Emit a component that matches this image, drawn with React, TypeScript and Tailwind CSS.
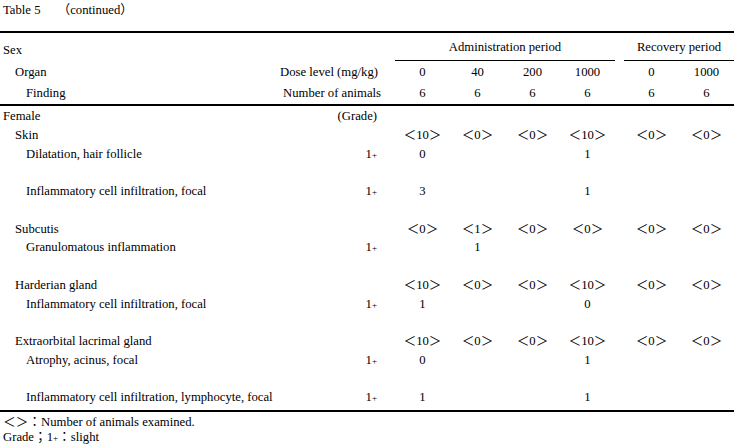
import React from 'react'

type Row = {
  label: string
  level: number
  grade?: string
  admin?: string[]
  recovery?: string[]
}

const rows: Row[] = [
  { label: 'Female', level: 0, grade: '(Grade)' },
  { label: 'Skin', level: 1, admin: ['＜10＞', '＜0＞', '＜0＞', '＜10＞'], recovery: ['＜0＞', '＜0＞'] },
  { label: 'Dilatation, hair follicle', level: 2, grade: '1+', admin: ['0', '', '', '1'] },
  { label: '', level: 0 },
  { label: 'Inflammatory cell infiltration, focal', level: 2, grade: '1+', admin: ['3', '', '', '1'] },
  { label: '', level: 0 },
  { label: 'Subcutis', level: 1, admin: ['＜0＞', '＜1＞', '＜0＞', '＜0＞'], recovery: ['＜0＞', '＜0＞'] },
  { label: 'Granulomatous inflammation', level: 2, grade: '1+', admin: ['', '1', '', ''] },
  { label: '', level: 0 },
  { label: 'Harderian gland', level: 1, admin: ['＜10＞', '＜0＞', '＜0＞', '＜10＞'], recovery: ['＜0＞', '＜0＞'] },
  { label: 'Inflammatory cell infiltration, focal', level: 2, grade: '1+', admin: ['1', '', '', '0'] },
  { label: '', level: 0 },
  { label: 'Extraorbital lacrimal gland', level: 1, admin: ['＜10＞', '＜0＞', '＜0＞', '＜10＞'], recovery: ['＜0＞', '＜0＞'] },
  { label: 'Atrophy, acinus, focal', level: 2, grade: '1+', admin: ['0', '', '', '1'] },
  { label: '', level: 0 },
  { label: 'Inflammatory cell infiltration, lymphocyte, focal', level: 2, grade: '1+', admin: ['1', '', '', '1'] },
]

const indent = ['pl-[3px]', 'pl-[15px]', 'pl-[26px]']

const Grade: React.FC<{ value: string }> = ({ value }) =>
  value === '1+' ? (
    <span>
      1<span className="text-[9px]">+</span>
    </span>
  ) : (
    <span>{value}</span>
  )

const App: React.FC = () => {
  return (
    <div
      className="w-[734px] h-[444px] bg-white text-black text-[12.7px] overflow-hidden"
      style={{ fontFamily: '"Liberation Serif", "Noto Sans CJK JP", serif' }}
    >
      <div className="h-[31px] pl-[3px] pt-[1px] leading-[18px]">
        Table 5<span className="ml-[17px]">（continued）</span>
      </div>

      <div className="border-t-2 border-black grid grid-cols-[330px_47px_18px_repeat(4,55px)_9px_repeat(2,55px)] leading-[18px]">
        {/* header row A */}
        <div className="col-span-3 h-[28px] pl-[3px] pt-[8px]">Sex</div>
        <div className="col-span-4 h-[28px] border-b border-black text-center pt-[5px]">Administration period</div>
        <div />
        <div className="col-span-2 h-[28px] border-b border-black text-center pt-[5px]">Recovery period</div>

        {/* header row B */}
        <div className="col-span-3 h-[21px] pt-[2px] flex justify-between pr-[17px]">
          <span className="pl-[15px]">Organ</span>
          <span>Dose level (mg/kg)</span>
        </div>
        {['0', '40', '200', '1000'].map((d, i) => (
          <div key={'d' + i} className="h-[21px] pt-[2px] text-center">{d}</div>
        ))}
        <div />
        {['0', '1000'].map((d, i) => (
          <div key={'r' + i} className="h-[21px] pt-[2px] text-center">{d}</div>
        ))}

        {/* header row C */}
        <div className="col-span-3 h-[22px] pt-[2px] flex justify-between pr-[14px]">
          <span className="pl-[26px]">Finding</span>
          <span>Number of animals</span>
        </div>
        {['6', '6', '6', '6'].map((d, i) => (
          <div key={'n' + i} className="h-[22px] pt-[2px] text-center">{d}</div>
        ))}
        <div />
        {['6', '6'].map((d, i) => (
          <div key={'m' + i} className="h-[22px] pt-[2px] text-center">{d}</div>
        ))}
      </div>

      <div className="border-t-2 border-b-2 border-black pt-[1px] pb-[3px] grid grid-cols-[330px_47px_18px_repeat(4,55px)_9px_repeat(2,55px)] auto-rows-[18.75px] leading-[18.75px]">
        {rows.map((r, i) => (
          <React.Fragment key={i}>
            <div className={`${indent[r.level]} whitespace-nowrap`}>{r.label}</div>
            <div className="text-right whitespace-nowrap">{r.grade ? <Grade value={r.grade} /> : null}</div>
            <div />
            {[0, 1, 2, 3].map((j) => (
              <div key={j} className="text-center whitespace-nowrap">{r.admin ? r.admin[j] : ''}</div>
            ))}
            <div />
            {[0, 1].map((j) => (
              <div key={j} className="text-center whitespace-nowrap">{r.recovery ? r.recovery[j] : ''}</div>
            ))}
          </React.Fragment>
        ))}
      </div>

      <div className="pl-[3px] pt-[3px] leading-[15px]">
        <div>＜＞：Number of animals examined.</div>
        <div>
          Grade；1<span className="text-[9px]">+</span>：slight
        </div>
      </div>
    </div>
  )
}

export default App
